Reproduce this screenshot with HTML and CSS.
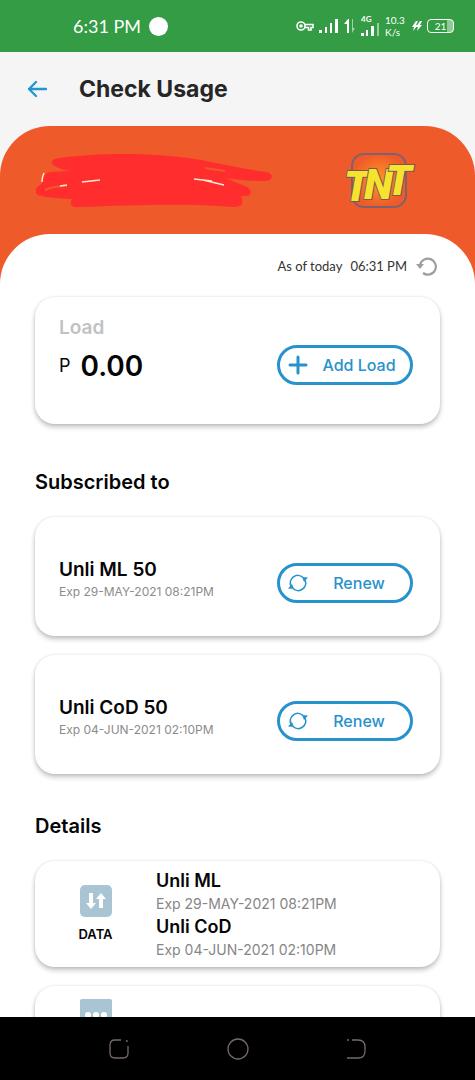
FILE: index.html
```html
<!DOCTYPE html>
<html lang="en">
<head>
<meta charset="utf-8">
<meta name="viewport" content="width=device-width, initial-scale=1">
<title>Check Usage</title>
<link rel="stylesheet" href="styles.css">
</head>
<body>
<div class="status-bar">
  <div class="status-time"><span>6:31 PM</span><span class="status-dot"></span></div>
  <div class="status-icons">
    <svg class="key" width="18" height="12" viewBox="0 0 18 12" fill="none" stroke="currentColor" stroke-width="1.6"><circle cx="5" cy="6" r="4"/><circle cx="5" cy="6" r="1"/><path d="M9 4.5h8v3h-2v2.500h-2.500V7.500H9"/></svg>
    <svg width="20" height="16" viewBox="0 0 20 16" fill="currentColor"><path d="M0 12h3v3H0zM6 9h2v6H6zM11 5h2v10h-2zM16 1h3v14h-3z"/></svg>
    <svg width="12" height="16" viewBox="0 0 12 16" fill="currentColor"><path d="M0 6 4 1h1v14H3V6z"/><path opacity=".55" d="M8 1h1v9h2l-3 5z"/></svg>
    <div class="network"><span>4G</span><svg width="19" height="14" viewBox="0 0 19 14" fill="currentColor"><path d="M0 10h3v3H0zM5 7h2v6H5zM10 3h3v10h-3z"/><path opacity=".5" d="M16 0h2v13h-2z"/></svg></div>
    <div class="speed"><span>10.3</span><span>K/s</span></div>
    <svg class="bolt" width="10" height="12" viewBox="0 0 10 12" fill="currentColor"><path d="M4 1 0 7h2L1 11l5-6H4l2-4zM8 1 4 7h2l-1 4 5-6H8l2-4z"/></svg>
    <div class="battery"><span>21</span></div>
  </div>
</div>

<header class="app-bar">
  <button class="back" type="button" aria-label="Back"><svg width="20" height="18" viewBox="0 0 20 18" fill="none" stroke="currentColor" stroke-width="2.300" stroke-linecap="round" stroke-linejoin="round"><path d="M19 9H2M9 2 2 9l7 7"/></svg></button>
  <h1>Check Usage</h1>
</header>

<main class="content">
  <div class="banner">
    <svg class="scribble" width="236" height="56" viewBox="0 0 236 56" role="img" aria-label="Hidden account">
      <path fill="#ff2d2e" d="M17 12C14 7 18 6 24 5 61 0 115-1 158 6c26 4 43 9 72 13 9 2 7 9-1 9-15 0-27-1-40-3l20 8c8 3 7 10 1 10h-5c3 7 1 11-7 11-50-4-93-2-158 0-6 0-6-5-4-8-14-1-27-1-34-4-5-3-1-10 4-11 0-7 2-11 8-12l21-1c-6-1-12-2-18-6z"/>
      <path fill="none" stroke="#ef5a2a" stroke-width="2" d="M9 37c6-3 14-4 22-4M169 15l20 3"/>
      <path fill="none" stroke="#ffe9d2" stroke-width="1.500" d="M6 29c0-4 1-7 2-9M24 33l7-1M46 29l18-2M158 26l18 2M167 27l21 5"/>
    </svg>
    <svg class="logo" width="72" height="62" viewBox="0 0 72 62" role="img" aria-label="TNT">
      <defs><radialGradient id="glow"><stop offset="0" stop-color="#ff9a22"/><stop offset="1" stop-color="#ef5a2a"/></radialGradient></defs>
      <rect x="7" y="4" width="54" height="53" rx="12" fill="url(#glow)" stroke="#7c626f" stroke-width="2"/>
      <text class="logo-text" x="-1 19 41" y="51 49 45" font-size="42">TNT</text>
    </svg>
  </div>

  <div class="sheet">
    <div class="updated">
      <span>As of today</span><time>06:31 PM</time>
      <button type="button" aria-label="Refresh"><svg width="22" height="20" viewBox="0 0 22 20" fill="none" stroke="currentColor" stroke-width="2.200"><path d="M4 9a8 8 0 1 1 3 8"/><path d="M0 8h8l-4 5z" fill="currentColor" stroke="none"/></svg></button>
    </div>

    <section class="card load">
      <div>
        <h2>Load</h2>
        <p class="balance"><span>P</span><strong>0.00</strong></p>
      </div>
      <button class="pill" type="button"><svg width="20" height="20" viewBox="0 0 20 20" fill="none" stroke="currentColor" stroke-width="3" stroke-linecap="round"><path d="M10 2v16M2 10h16"/></svg><span>Add Load</span></button>
    </section>

    <section>
      <h2 class="section-title">Subscribed to</h2>
      <div class="stack">
        <article class="card plan">
          <div><h3>Unli ML 50</h3><p>Exp 29-MAY-2021 08:21PM</p></div>
          <button class="pill" type="button"><svg width="20" height="18" viewBox="0 0 20 18" fill="none" stroke="currentColor" stroke-width="1.700"><path d="M3 12A7.500 7.500 0 0 1 15 3.500M17 6A7.500 7.500 0 0 1 5 14.500"/><path d="M0 14.500 4 10l2 5zM20 3.500 16 8l-2-5z" fill="currentColor" stroke="none"/></svg><span>Renew</span></button>
        </article>
        <article class="card plan">
          <div><h3>Unli CoD 50</h3><p>Exp 04-JUN-2021 02:10PM</p></div>
          <button class="pill" type="button"><svg width="20" height="18" viewBox="0 0 20 18" fill="none" stroke="currentColor" stroke-width="1.700"><path d="M3 12A7.500 7.500 0 0 1 15 3.500M17 6A7.500 7.500 0 0 1 5 14.500"/><path d="M0 14.500 4 10l2 5zM20 3.500 16 8l-2-5z" fill="currentColor" stroke="none"/></svg><span>Renew</span></button>
        </article>
      </div>
    </section>

    <section>
      <h2 class="section-title">Details</h2>
      <div class="stack">
        <article class="card detail">
          <div class="kind">
            <svg width="32" height="32" viewBox="0 0 32 32"><rect width="32" height="32" rx="5" fill="#a9c5d3"/><path fill="#fff" d="M9 8h4v10h3l-5 6-5-6h3zM19 23h4V14h3l-5-6-5 6h3z"/></svg>
            <span>DATA</span>
          </div>
          <div class="plans">
            <h3>Unli ML</h3><p>Exp 29-MAY-2021 08:21PM</p>
            <h3>Unli CoD</h3><p>Exp 04-JUN-2021 02:10PM</p>
          </div>
        </article>
        <article class="card detail">
          <div class="kind">
            <svg width="32" height="32" viewBox="0 0 32 32"><path fill="#a9c5d3" d="M2 0h28q2 0 2 2v22q0 2-2 2H14l-6 6v-6H2q-2 0-2-2V2q0-2 2-2z"/><g fill="#fff"><circle cx="8" cy="16" r="3"/><circle cx="16" cy="16" r="3"/><circle cx="24" cy="16" r="3"/></g></svg>
          </div>
        </article>
      </div>
    </section>
  </div>
</main>

<nav class="system-nav">
  <button type="button" aria-label="Recent apps"><svg width="22" height="22" viewBox="0 0 22 22"><path d="M13 2H7Q2 2 2 7v8q0 5 5 5h8q5 0 5-5V8M18 3h1v1"/></svg></button>
  <button type="button" aria-label="Home"><svg width="22" height="22" viewBox="0 0 22 22"><circle cx="11" cy="11" r="10"/></svg></button>
  <button type="button" aria-label="Go back"><svg width="22" height="22" viewBox="0 0 22 22"><path d="M7 2h6q7 0 7 7v4q0 7-7 7H2M2 2h2"/></svg></button>
</nav>
</body>
</html>
```
FILE: styles.css
```css
* { box-sizing: border-box; }

body {
  margin: 0;
  height: 100vh;
  display: flex;
  flex-direction: column;
  background: #f5f5f5;
  color: #050505;
  font-family: Inter, "Liberation Sans", sans-serif;
}

h1, h2, h3, p { margin: 0; }

button {
  font: inherit;
  padding: 0;
  border: 0;
  background: none;
  color: inherit;
}

svg { display: block; flex: none; }

.status-bar {
  flex: none;
  height: 52px;
  padding: 0 21px 0 73px;
  display: flex;
  align-items: center;
  justify-content: space-between;
  background: #339c44;
  color: #fff;
}

.status-time {
  display: flex;
  align-items: center;
  gap: 8px;
  font: 18px/24px Lato, sans-serif;
}

.status-dot {
  width: 19px;
  height: 19px;
  border-radius: 50%;
  background: #fff;
}

.status-icons {
  display: flex;
  align-items: center;
  gap: 5px;
}

.network {
  width: 19px;
  display: flex;
  flex-direction: column;
  font: bold 8px/8px Lato, sans-serif;
}

.network svg { align-self: flex-end; }

.speed {
  width: 20px;
  display: flex;
  flex-direction: column;
  font: 10px/12px Lato, sans-serif;
}

.bolt { margin-left: 2px; }

.battery {
  width: 27px;
  height: 14px;
  border: 1px solid #fff;
  border-radius: 4px;
  background: linear-gradient(90deg, transparent 75%, #8fca99 75%);
  font: 10px/12px Lato, sans-serif;
  text-align: center;
}

.app-bar {
  flex: none;
  height: 74px;
  padding: 0 27px;
  display: flex;
  align-items: center;
  gap: 32px;
}

.back { color: #2196cf; }

.app-bar h1 {
  font-size: 23px;
  line-height: 32px;
  font-weight: 700;
  color: #262626;
}

.content {
  flex: 1;
  min-height: 0;
  overflow: hidden;
  border-radius: 50px 50px 0 0;
  background: #ef5a2a;
}

.banner {
  height: 108px;
  padding: 2px 58px 0 36px;
  display: flex;
  align-items: center;
  justify-content: space-between;
}

.logo { overflow: visible; }

.logo-text {
  fill: #f7e32d;
  stroke: #765b56;
  stroke-width: 2px;
  paint-order: stroke;
  font-family: Roboto, sans-serif;
  font-weight: 900;
  font-style: italic;
}

.sheet {
  padding: 0 35px;
  border-radius: 50px 50px 0 0;
  background: #fff;
}

.updated {
  height: 63px;
  display: flex;
  align-items: center;
  justify-content: flex-end;
  gap: 8px;
  font: 13px/20px Lato, sans-serif;
  color: #333;
}

.updated button {
  margin: 0 2px 0 1px;
  color: #9b9f9f;
}

.card {
  display: flex;
  border-radius: 20px;
  background: #fff;
  box-shadow: 0 3px 5px rgba(0, 0, 0, .24), 0 0 3px rgba(0, 0, 0, .1);
}

.load {
  min-height: 127px;
  padding: 0 27px 0 24px;
  justify-content: space-between;
  align-items: center;
}

.load > div { padding-bottom: 22px; }

.load h2 {
  font-size: 19px;
  line-height: 28px;
  font-weight: 600;
  color: #bfc2c5;
}

.balance {
  display: flex;
  align-items: center;
  gap: 10px;
  margin-top: 4px;
  line-height: 40px;
}

.balance span { font-size: 18px; }

.balance strong {
  font-size: 28px;
  font-weight: 600;
}

.load .pill { margin-top: 8px; }

.pill {
  width: 136px;
  height: 40px;
  padding: 0 8px;
  display: flex;
  align-items: center;
  border: 3px solid #2792cb;
  border-radius: 20px;
  color: #2792cb;
  font-size: 16px;
  font-weight: 500;
}

.pill span {
  flex: 1;
  padding-left: 8px;
  text-align: center;
  white-space: nowrap;
}

.section-title {
  padding: 43px 0 20px;
  font-size: 20px;
  line-height: 30px;
  font-weight: 600;
}

section + section + section .section-title { padding-top: 37px; }

.stack {
  display: grid;
  gap: 19px;
}

.plan {
  min-height: 119px;
  padding: 12px 27px 0 24px;
  justify-content: space-between;
  align-items: center;
}

h3 {
  font-size: 19px;
  line-height: 26px;
  font-weight: 600;
}

.plan p {
  font-size: 12px;
  line-height: 18px;
  color: #8b8b8b;
}

.plan > div { padding-bottom: 8px; }

.detail {
  min-height: 106px;
  align-items: flex-start;
}

.kind {
  width: 121px;
  padding-top: 24px;
  display: flex;
  flex-direction: column;
  align-items: center;
  gap: 8px;
  font-size: 13px;
  line-height: 18px;
  font-weight: 600;
}

.detail + .detail .kind { padding-top: 13px; }

.plans { padding-top: 7px; }

.detail h3 {
  font-size: 18px;
  line-height: 26px;
}

.detail p {
  font-size: 14px;
  line-height: 20px;
  color: #868686;
}

.system-nav {
  flex: none;
  height: 63px;
  padding: 0 108px;
  display: flex;
  align-items: center;
  justify-content: space-between;
  background: #000;
}

.system-nav svg {
  fill: none;
  stroke: #75696b;
  stroke-width: 1.300px;
}
```
